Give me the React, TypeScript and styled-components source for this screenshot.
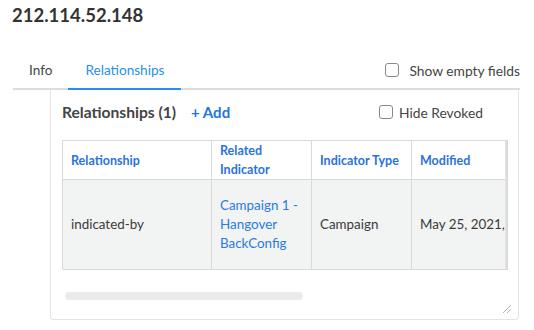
import React from 'react'
import styled, { createGlobalStyle } from 'styled-components'

const GlobalStyle = createGlobalStyle`
    body {
        margin: 0;
        background: #ffffff;
        font-family: Lato, "Liberation Sans", sans-serif;
        color: #333333;
    }
`;

const Page = styled.div`
    width: 534px;
    height: 330px;
    overflow: hidden;
    padding: 4px 14px 0 13px;
    box-sizing: border-box;
`;

const Title = styled.h1`
    margin: 0;
    height: 22px;
    line-height: 22px;
    font-size: 18.5px;
    font-weight: 700;
    color: #333333;
    margin-left: -1px;
`;

const TabBar = styled.div`
    margin-top: 26px;
    display: flex;
    align-items: stretch;
    height: 38px;
    box-sizing: border-box;
    border-bottom: 2px solid #dcdcdc;
`;

const Tab = styled.div<{ $active?: boolean }>`
    display: flex;
    align-items: center;
    padding: 0 ${(p) => (p.$active ? 17 : 16)}px;
    margin-bottom: -2px;
    font-size: 13.6px;
    color: ${(p) => (p.$active ? '#2490ee' : '#444444')};
    border-bottom: 2px solid ${(p) => (p.$active ? '#2490ee' : 'transparent')};
`;

const TabSpacer = styled.div`
    flex: 1;
`;

const CheckLabel = styled.label<{ $gap: number }>`
    display: flex;
    align-items: center;
    gap: ${(p) => p.$gap}px;
    font-size: 13.8px;
    color: #444444;
`;

const Box = styled.span`
    width: 12px;
    height: 12px;
    border: 1px solid #8a8a8a;
    border-radius: 3px;
    background: #ffffff;
`;

const Panel = styled.div`
    position: relative;
    margin-left: 37px;
    margin-right: 1px;
    height: 230px;
    border: 1px solid #e3e3e3;
    border-top: none;
    border-radius: 0 0 4px 4px;
    padding: 10px 9px 0 11px;
    box-sizing: border-box;
`;

const PanelHead = styled.div`
    display: flex;
    align-items: center;
    height: 24px;
    padding-right: 26px;
    margin-bottom: 16px;
`;

const PanelTitle = styled.span`
    font-size: 15.6px;
    font-weight: 700;
    color: #444444;
`;

const AddLink = styled.span`
    margin-left: 15px;
    font-size: 15px;
    font-weight: 700;
    color: #1f74dd;
`;

const TableWrap = styled.div`
    position: relative;
    width: 446px;
    overflow: hidden;

    &::after {
        content: '';
        position: absolute;
        top: 0;
        right: 0;
        width: 3px;
        height: 129px;
        background: linear-gradient(to right, #e6e6e6, #d4d4d4);
    }
`;

const Table = styled.table`
    width: 560px;
    table-layout: fixed;
    border-collapse: collapse;
    font-size: 13.4px;
`;

const HeadCell = styled.th<{ $w: number }>`
    box-sizing: border-box;
    width: ${(p) => p.$w}px;
    height: 38px;
    padding: 0 8px;
    text-align: left;
    vertical-align: middle;
    font-size: 12.5px;
    font-weight: 700;
    line-height: 19px;
    color: #2a73dc;
    border: 1px solid #d9d9d9;
    background: #ffffff;
`;

const Cell = styled.td`
    height: 89px;
    padding: 0 8px;
    vertical-align: middle;
    line-height: 19px;
    color: #3a3a3a;
    white-space: nowrap;
    border: 1px solid #d9d9d9;
    background: #f2f3f3;
`;

const LinkCell = styled(Cell)`
    white-space: normal;
    color: #2b7be0;
`;

const ScrollThumb = styled.div`
    margin: 22px 0 0 3px;
    width: 238px;
    height: 8px;
    border-radius: 4px;
    background: #ebebeb;
`;

const Grip = styled.svg`
    position: absolute;
    right: 6px;
    bottom: 5px;
`;

export default function App() {
    return (
        <Page>
            <GlobalStyle />
            <Title>212.114.52.148</Title>
            <TabBar>
                <Tab>Info</Tab>
                <Tab $active>Relationships</Tab>
                <TabSpacer />
                <CheckLabel $gap={10}>
                    <Box />
                    Show empty fields
                </CheckLabel>
            </TabBar>
            <Panel>
                <PanelHead>
                    <PanelTitle>Relationships (1)</PanelTitle>
                    <AddLink>+ Add</AddLink>
                    <TabSpacer />
                    <CheckLabel $gap={6}>
                        <Box />
                        Hide Revoked
                    </CheckLabel>
                </PanelHead>
                <TableWrap>
                    <Table>
                        <thead>
                            <tr>
                                <HeadCell $w={149}>Relationship</HeadCell>
                                <HeadCell $w={100}>Related Indicator</HeadCell>
                                <HeadCell $w={100}>Indicator Type</HeadCell>
                                <HeadCell $w={211}>Modified</HeadCell>
                            </tr>
                        </thead>
                        <tbody>
                            <tr>
                                <Cell>indicated-by</Cell>
                                <LinkCell>Campaign 1 - Hangover BackConfig</LinkCell>
                                <Cell>Campaign</Cell>
                                <Cell>May 25, 2021, 10:42 AM</Cell>
                            </tr>
                        </tbody>
                    </Table>
                </TableWrap>
                <ScrollThumb />
                <Grip width="10" height="10" viewBox="0 0 10 10">
                    <path d="M1 9 L9 1 M5 9 L9 5" stroke="#b5b5b5" strokeWidth="1" fill="none" />
                </Grip>
            </Panel>
        </Page>
    )
}
